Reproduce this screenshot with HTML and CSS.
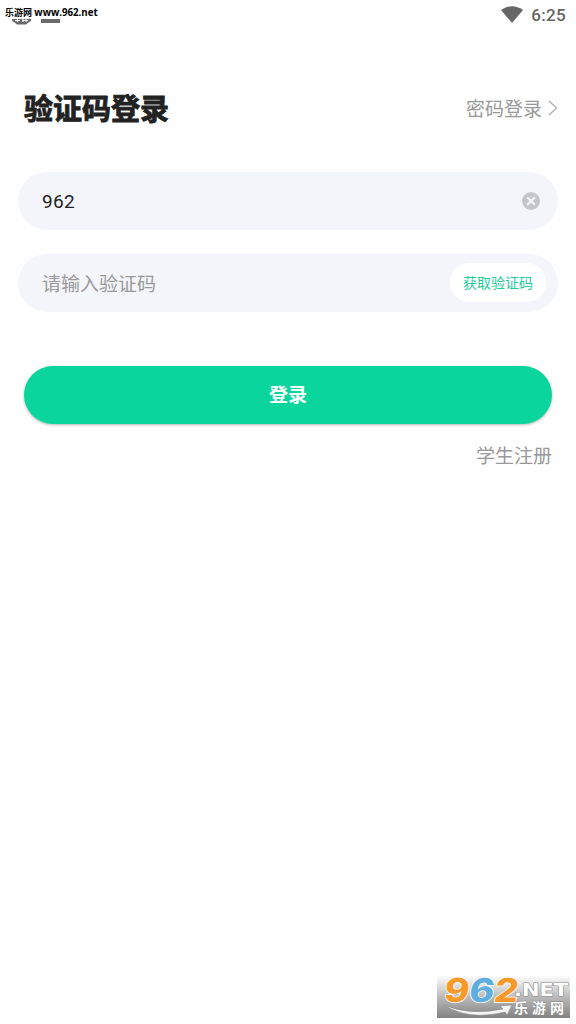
FILE: index.html
```html
<!DOCTYPE html>
<html lang="zh-CN">
<head>
<meta charset="utf-8">
<title>验证码登录</title>
<link rel="stylesheet" href="styles.css">
</head>
<body>
<div class="screen">
  <header class="status">
    <svg class="status-icons" width="50" height="12" viewBox="0 0 50 12">
      <path d="M0 0H19V6Q19 8 17 8L14 10.500H5L2 8Q0 8 0 6Z" fill="#6a6a6a"/>
      <path d="M3 6.500H8M10 6.500H16M5.500 4v4M11 5v3M14 4v4" stroke="#fff" fill="none"/>
      <path d="M29 5H48V9H29Z" fill="#6a6a6a"/>
    </svg>
    <span class="site-tag">乐游网 <span class="site-url">www.962.net</span></span>
    <div class="status-right">
      <svg width="22" height="17" viewBox="0 0 22 17"><path d="M0 4Q11-3.500 22 4L11 17Z" fill="#666"/></svg>
      <span class="clock">6:25</span>
    </div>
  </header>
  <main class="login">
    <div class="heading">
      <h1 class="title">验证码登录</h1>
      <a class="switch"><span>密码登录</span><svg class="chevron" width="10" height="16" viewBox="0 0 10 16"><path d="M1 1L8.500 8L1 15" fill="none" stroke="#b0b0b0" stroke-width="1.300"/></svg></a>
    </div>
    <div class="field">
      <span class="value">962</span>
      <svg class="clear" width="18" height="18" viewBox="0 0 18 18"><circle cx="9" cy="9" r="9" fill="#c5c6c9"/><path d="M5.200 5.200L12.800 12.800M12.800 5.200L5.200 12.800" stroke="#f4f5fa" stroke-width="2"/></svg>
    </div>
    <div class="field field-code">
      <span class="placeholder">请输入验证码</span>
      <button class="get-code">获取验证码</button>
    </div>
    <button class="submit">登录</button>
    <a class="register">学生注册</a>
  </main>
  <svg class="logo" width="133" height="43" viewBox="0 0 133 43">
    <defs>
      <linearGradient id="back" x1="0" y1="0" x2="0" y2="1"><stop offset="0" stop-color="#fff"/><stop offset=".5" stop-color="#bcbcbc"/><stop offset="1" stop-color="#828282"/></linearGradient>
    </defs>
    <rect width="133" height="43" fill="url(#back)"/>
    <path d="M7 30Q32 41 66 34L63 31L75 30L70 40L68 37Q31 46 7 30Z" fill="#f4f4f4" stroke="#888" stroke-width=".6"/>
    <text class="logo-digits" transform="translate(6 27) skewX(-8)" textLength="74" lengthAdjust="spacingAndGlyphs"><tspan class="orange">9</tspan><tspan class="blue">6</tspan><tspan class="orange">2</tspan></text>
    <text class="logo-net" x="77" y="20.500" textLength="54" lengthAdjust="spacingAndGlyphs">.NET</text>
    <text class="logo-name" x="77" y="38" textLength="50">乐游网</text>
  </svg>
</div>
</body>
</html>
```
FILE: styles.css
```css
* { box-sizing: border-box; }
body { margin: 0; background: #fff; }
.screen {
  position: relative;
  width: 576px;
  height: 1024px;
  overflow: hidden;
  background: #fefefe;
  font-family: Roboto, "Noto Sans CJK SC", sans-serif;
}
.status {
  display: flex;
  justify-content: flex-end;
  height: 30px;
  padding-right: 10px;
}
.status-icons { position: absolute; left: 12px; top: 14px; }
.site-tag {
  position: absolute;
  left: 5px;
  top: 6px;
  height: 13px;
  background: #fefefe;
  color: #000;
  font: 700 9px/13px "Open Sans", "Noto Sans CJK SC", sans-serif;
  white-space: nowrap;
}
.site-url { font-size: 9.700px; }
.status-right { display: flex; align-items: center; gap: 8px; height: 29px; }
.clock { font-size: 17px; font-weight: 500; line-height: 29px; color: #666; padding-top: 2px; letter-spacing: .3px; }
.login { display: flex; flex-direction: column; padding: 50px 18px 0; }
.heading {
  display: flex;
  justify-content: space-between;
  align-items: center;
  height: 56px;
  margin: 0 0 36px 6px;
}
.title {
  margin: 0;
  padding-top: 4px;
  font-size: 29px;
  line-height: 56px;
  font-weight: 700;
  color: #222;
  -webkit-text-stroke: .9px #222;
}
.switch { display: flex; align-items: center; gap: 6px; color: #999; font-size: 19px; line-height: 56px; }
.switch span { padding-top: 4px; }
.field {
  display: flex;
  align-items: center;
  justify-content: space-between;
  height: 58px;
  margin-bottom: 24px;
  padding: 0 18px 0 24px;
  border-radius: 29px;
  background: #f4f5fa;
}
.field-code { padding-right: 12px; margin-bottom: 54px; }
.value { color: #222; font-size: 19px; letter-spacing: .3px; }
.placeholder { padding-bottom: 2px; color: #999; font-size: 19px; }
.get-code {
  width: 96px;
  height: 39px;
  margin-bottom: 2px;
  padding: 1px 0 0;
  border: 0;
  border-radius: 20px;
  background: #fff;
  color: #1fcb99;
  font: 400 14px/38px Roboto, "Noto Sans CJK SC", sans-serif;
}
.submit {
  height: 58px;
  margin: 0 6px;
  padding: 2px 0 0;
  border: 0;
  border-radius: 29px;
  background: #09d59d;
  box-shadow: 0 1px 3px rgba(0, 0, 0, .28);
  color: #fff;
  font: 700 19px/56px Roboto, "Noto Sans CJK SC", sans-serif;
}
.register { align-self: flex-end; margin: 19px 6px 0 0; color: #999; font-size: 19px; line-height: 28px; }
.logo { position: absolute; left: 437px; top: 975px; overflow: visible; }
.logo-digits {
  font: 800 33px Inter, "DejaVu Sans", sans-serif;
  stroke: #fff;
  stroke-width: 1.5px;
  paint-order: stroke;
}
.orange { fill: #f79a2b; }
.blue { fill: #5eaee0; }
.logo-net, .logo-name { fill: #fff; stroke: #888; stroke-width: 1px; paint-order: stroke; }
.logo-net { font: 700 17px "DejaVu Sans", sans-serif; }
.logo-name { font: 700 14px "Noto Sans CJK SC", sans-serif; }
```
